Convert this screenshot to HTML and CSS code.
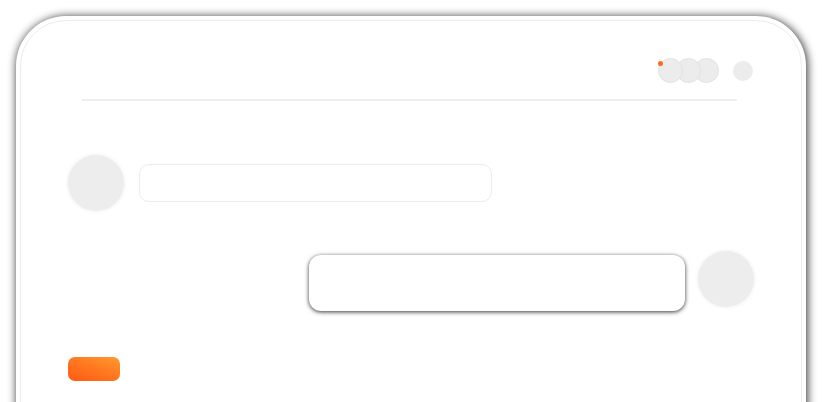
FILE: index.html
```html
<!DOCTYPE html>
<html>
<head>
<meta charset="utf-8">
<link rel="stylesheet" href="styles.css">
</head>
<body>
<div class="frame">
  <div class="screen">
    <div class="header">
      <div class="stack">
        <span class="dot"></span>
        <span class="face f1"></span>
        <span class="face f2"></span>
        <span class="face f3"></span>
      </div>
      <span class="menu"></span>
    </div>
    <div class="divider"></div>
    <div class="row row-left">
      <div class="avatar"></div>
      <div class="bubble bubble-in"></div>
    </div>
    <div class="row row-right">
      <div class="bubble bubble-out"></div>
      <div class="avatar"></div>
    </div>
    <div class="action"></div>
  </div>
</div>
</body>
</html>
```
FILE: styles.css
```css
html, body {
  margin: 0;
  padding: 0;
  background: #fff;
  overflow: hidden;
}
body {
  width: 822px;
  height: 402px;
  font-family: "Liberation Sans", Arial, sans-serif;
}
.frame {
  margin: 16px 0 0 16px;
  width: 790px;
  height: 440px;
  box-sizing: border-box;
  padding: 4px;
  background: #fff;
  border-radius: 50px;
  box-shadow: 1px 1px 8px 1px rgba(0,0,0,0.72);
}
.screen {
  height: 100%;
  box-sizing: border-box;
  border: 1px solid #ececec;
  border-radius: 46px;
  padding: 37px 47px 0 47px;
}
.header {
  display: flex;
  justify-content: flex-end;
  align-items: center;
  gap: 14px;
  height: 25px;
  padding-right: 1px;
}
.stack {
  position: relative;
  display: flex;
}
.face {
  width: 25px;
  height: 25px;
  box-sizing: border-box;
  border-radius: 50%;
  background: #ececec;
  border: 1px solid #e2e2e2;
}
.f2, .f3 { margin-left: -7px; }
.f1 { position: relative; z-index: 3; }
.f2 { position: relative; z-index: 2; }
.f3 { position: relative; z-index: 1; }
.dot {
  position: absolute;
  left: 0;
  top: 3px;
  width: 5px;
  height: 5px;
  border-radius: 50%;
  background: #ff6a1c;
  z-index: 5;
}
.menu {
  width: 20px;
  height: 20px;
  border-radius: 50%;
  background: #ececec;
}
.divider {
  height: 2px;
  background: #efefef;
  margin: 16px 17px 0 14px;
}
.row {
  display: flex;
}
.row-left {
  margin-top: 54px;
  align-items: center;
  gap: 15px;
}
.row-right {
  margin-top: 40px;
  justify-content: flex-end;
  align-items: flex-start;
  gap: 13px;
}
.avatar {
  width: 56px;
  height: 56px;
  flex: none;
  border-radius: 50%;
  background: #ededed;
  box-shadow: 0 0 4px #ececec;
}
.bubble {
  box-sizing: border-box;
  background: #fff;
}
.bubble-in {
  width: 353px;
  height: 38px;
  border: 1px solid #ececec;
  border-radius: 10px;
}
.bubble-out {
  width: 376px;
  height: 56px;
  margin-top: 4px;
  border-radius: 12px;
  box-shadow: 0 1px 4px 0 rgba(0,0,0,0.8);
}
.action {
  margin-top: 46px;
  width: 52px;
  height: 24px;
  border-radius: 7px;
  background: linear-gradient(20deg, #ff5a12 0%, #ff7a20 55%, #ff9a30 100%);
}
```
